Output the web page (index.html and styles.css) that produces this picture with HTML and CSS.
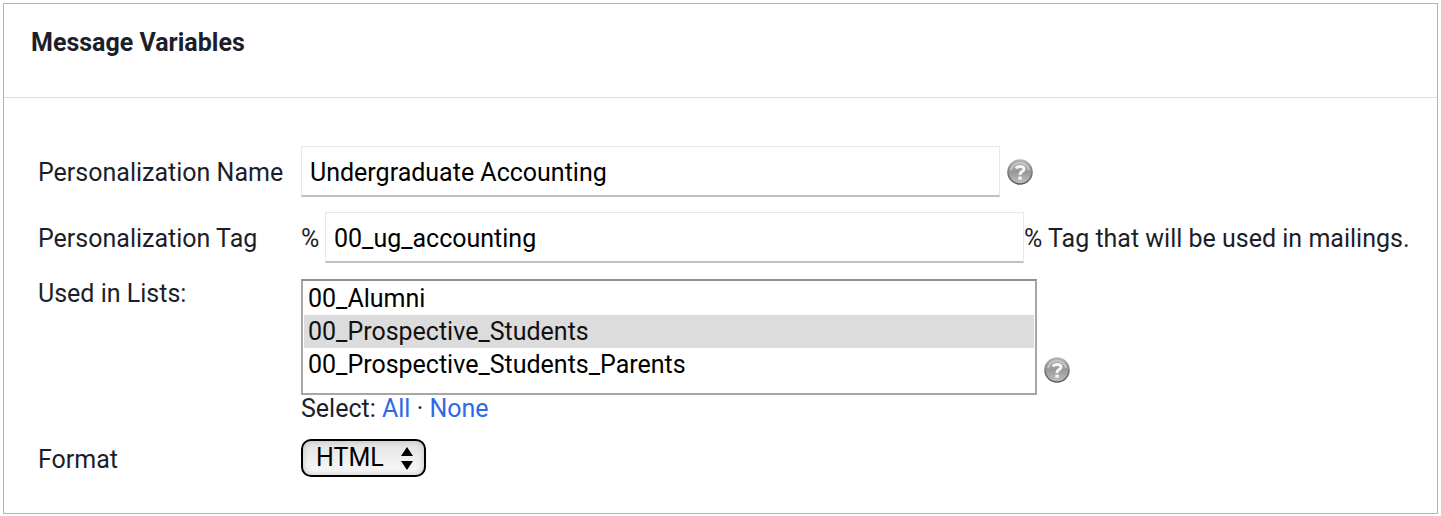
FILE: index.html
```html
<!DOCTYPE html>
<html lang="en">
<head>
	<title>Message Variables</title>
	<meta charset="utf-8">
	<link rel="stylesheet" href="styles.css">
</head>
<body>
	<svg class="defs" aria-hidden="true">
		<defs>
			<linearGradient id="ball" x1="0" y1="0" x2="0" y2="1">
				<stop offset="0" stop-color="#b4b4b4"/>
				<stop offset="0.5" stop-color="#989898"/>
				<stop offset="1" stop-color="#c0c0c0"/>
			</linearGradient>
			<linearGradient id="rim" x1="0" y1="0" x2="0" y2="1">
				<stop offset="0" stop-color="#b4b4b4"/>
				<stop offset="0.5" stop-color="#7c7c7c"/>
				<stop offset="1" stop-color="#5c5c5c"/>
			</linearGradient>
			<symbol id="help" viewBox="0 0 26 26">
				<circle cx="13" cy="13" r="12" fill="url(#ball)" stroke="url(#rim)" stroke-width="1.6"/>
				<path d="M4 11a9.200 9.200 0 0 1 18 0" fill="none" stroke="#cbcbcb" stroke-width="1.500"/>
				<path d="M9 9.500q1-2 4.200-2 3.800 0 3.800 2.500 0 1.700-2 2.700-2 1-2 3.300" fill="none" stroke="#f4f4f4" stroke-width="3"/>
				<rect x="11.300" y="17.500" width="3.500" height="3.200" fill="#f4f4f4"/>
			</symbol>
		</defs>
	</svg>
	<form class="panel">
		<h2 class="panel-title">Message Variables</h2>
		<div class="fields">
			<label class="label" for="name">Personalization Name</label>
			<div class="control">
				<input class="text" type="text" id="name" value="Undergraduate Accounting">
				<button class="help" type="button" aria-label="Help"><svg><use href="#help"/></svg></button>
			</div>

			<label class="label" for="tag">Personalization Tag</label>
			<div class="control">
				<span class="percent">%</span>
				<input class="text" type="text" id="tag" value="00_ug_accounting">
				<span class="note">% Tag that will be used in mailings.</span>
			</div>

			<label class="label label-top" for="lists">Used in Lists:</label>
			<div class="lists">
				<div class="control control-end">
					<select class="listbox" id="lists" size="3" multiple>
						<option>00_Alumni</option>
						<option selected>00_Prospective_Students</option>
						<option>00_Prospective_Students_Parents</option>
					</select>
					<button class="help" type="button" aria-label="Help"><svg><use href="#help"/></svg></button>
				</div>
				<div class="picker">Select: <a href="#all">All</a> · <a href="#none">None</a></div>
			</div>

			<label class="label label-format" for="format">Format</label>
			<div class="control">
				<span class="dropdown">
					<select id="format">
						<option>HTML</option>
						<option>Text</option>
					</select>
					<svg class="arrows" viewBox="0 0 12 23"><path d="M6 0l6 9H0zM6 23l6-9H0z"/></svg>
				</span>
			</div>
		</div>
	</form>
</body>
</html>
```
FILE: styles.css
```css
* {
	box-sizing: border-box;
}
body {
	margin: 3px;
	background: #ffffff;
	color: #1c1e29;
	font: 25px/28px Roboto, "Liberation Sans", sans-serif;
}
.defs {
	position: absolute;
	width: 0;
	height: 0;
}
.panel {
	border: 1px solid #b4b4b4;
	padding-bottom: 36px;
}
.panel-title {
	margin: 0;
	padding: 25px 27px 40px;
	border-bottom: 1px solid #d9dfe5;
	font-size: 25px;
	font-weight: 700;
}
.fields {
	display: grid;
	grid-template-columns: 263px 1fr;
	row-gap: 15px;
	align-items: center;
	padding: 48px 0 0 34px;
}
.label, .percent, .note {
	padding-top: 2px;
}
.label-format {
	padding-top: 4px;
}
.label-top {
	align-self: start;
}
.control {
	display: flex;
	align-items: center;
}
.control-end {
	align-items: flex-end;
}
.text {
	width: 699px;
	height: 51px;
	min-width: 0;
	padding: 2px 8px 0;
	border: 1px solid #e8e8e8;
	border-bottom: 2px solid #c0c0c0;
	background: #ffffff;
	color: #000000;
	font: inherit;
}
.percent, .note {
	white-space: nowrap;
}
.percent {
	width: 24px;
}
.help {
	flex: none;
	width: 26px;
	height: 26px;
	margin-left: 7px;
	padding: 0;
	border: 0;
	background: none;
}
.help svg {
	display: block;
	width: 26px;
	height: 26px;
}
.control-end .help {
	margin-bottom: 12px;
}
.lists {
	padding: 1px 0;
}
.listbox {
	width: 736px;
	height: 116px;
	min-width: 0;
	padding: 1px;
	border: 2px solid #a6a6a6;
	border-top-color: #8f8f8f;
	border-radius: 0;
	background: #ffffff;
	color: #000000;
	font: inherit;
	overflow: hidden;
	outline: none;
}
.listbox option {
	height: 33px;
	min-height: 33px;
	padding: 2px 4px 0;
	line-height: 31px;
}
.listbox option:checked {
	background: #dcdcdc linear-gradient(#dcdcdc, #dcdcdc);
}
.picker a {
	color: #2f68e8;
	text-decoration: none;
}
.dropdown {
	display: grid;
	align-items: center;
}
.dropdown select {
	grid-area: 1 / 1;
	width: 125px;
	height: 38px;
	padding: 0 13px;
	border: 2px solid #000000;
	border-radius: 10px;
	background: linear-gradient(#e2e2e2, #fafafa);
	box-shadow: inset 0 0 6px #bdbdbd;
	color: #000000;
	font: inherit;
	appearance: none;
}
.arrows {
	grid-area: 1 / 1;
	justify-self: end;
	width: 12px;
	height: 23px;
	margin-right: 13px;
	pointer-events: none;
}
```
